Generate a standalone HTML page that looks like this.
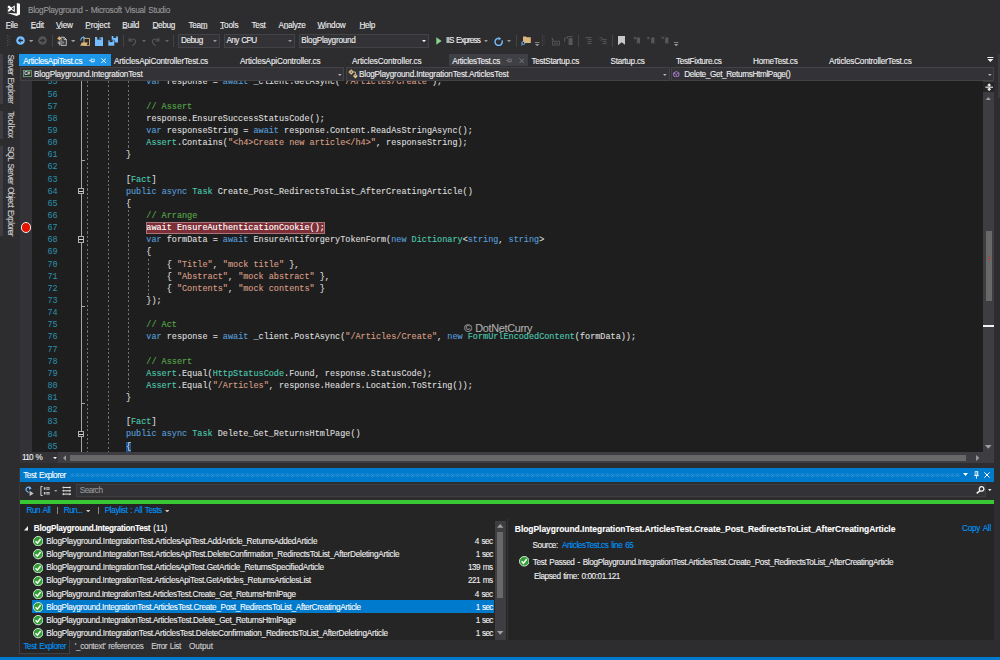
<!DOCTYPE html>
<html lang="en">
<head>
<meta charset="utf-8">
<title>BlogPlayground - Microsoft Visual Studio</title>
<style>
html,body{margin:0;padding:0;background:#2d2d30;}
body{width:1000px;height:660px;overflow:hidden;font-family:"Liberation Sans",sans-serif;}
#app{position:relative;width:1000px;height:660px;overflow:hidden;background:#2d2d30;}
#app>div,#app>svg,#app>span{position:absolute;}
.t{white-space:pre;word-spacing:0.9px;-webkit-text-stroke:0.1px currentColor;}
u{text-decoration:underline;text-underline-offset:0.4px;text-decoration-thickness:0.5px;text-decoration-color:rgba(241,241,241,0.6);}
#code{left:20px;top:81px;width:963px;height:371px;background:#1e1e1e;overflow:hidden;}
#code .gut{position:absolute;left:0;top:0;width:12px;height:371px;background:#333337;}
#code .ln{position:absolute;left:0;top:-4.58px;width:37.6px;text-align:right;color:#2b91af;font:8.5px/12.15px "Liberation Mono",monospace;white-space:pre;}
#code .src{-webkit-text-stroke:0.12px currentColor;position:absolute;left:65.1px;top:-4.6px;color:#dcdcdc;font:8.505px/12.15px "Liberation Mono",monospace;white-space:pre;}
#code .src div,#code .ln div{height:12.15px;}
.k{color:#569cd6}.y{color:#4ec9b0}.s{color:#d69d85}.c{color:#57a64a}
.bp{background:#7d2e36;color:#fff;outline:1px solid #a8757a;outline-offset:-1px;display:inline-block;height:12.15px;padding:0 0.6px;margin:0 -0.6px;}
.bm{background:#0f4584;box-shadow:inset 0 0 0 0.6px #2f63a0;}
.guide{position:absolute;top:0;width:1.2px;height:371px;background:repeating-linear-gradient(to bottom,#727272 0,#727272 2.1px,transparent 2.1px,transparent 4.3px);}
</style>
</head>
<body>
<div id="app">
<svg style="left:6px;top:2px;" width="15" height="15" viewBox="0 0 15 15"><path d="M0.8 10.8L10.8 11.4V1L14 1.7V12.6L10.6 13.9Z" fill="#fff"/><path d="M1.8 4.2L3 3.6L5.6 5.6L8.8 3.2V10.2L5.6 7.8L3 9.8L1.8 9.2ZM1.7 5.5L3.4 6.7L1.7 7.9ZM7.7 5.1L5.7 6.7L7.7 8.3Z" fill="#fff" fill-rule="evenodd"/></svg>
<svg style="left:7px;top:35px;" width="3" height="12" viewBox="0 0 3 12"><rect x="0.0" y="0.00" width="0.9" height="0.9" fill="#5a5a5e"/><rect x="1.6" y="1.25" width="0.9" height="0.9" fill="#5a5a5e"/><rect x="0.0" y="2.50" width="0.9" height="0.9" fill="#5a5a5e"/><rect x="1.6" y="3.75" width="0.9" height="0.9" fill="#5a5a5e"/><rect x="0.0" y="5.00" width="0.9" height="0.9" fill="#5a5a5e"/><rect x="1.6" y="6.25" width="0.9" height="0.9" fill="#5a5a5e"/><rect x="0.0" y="7.50" width="0.9" height="0.9" fill="#5a5a5e"/><rect x="1.6" y="8.75" width="0.9" height="0.9" fill="#5a5a5e"/><rect x="0.0" y="10.00" width="0.9" height="0.9" fill="#5a5a5e"/></svg>
<svg style="left:15.6px;top:36.1px;" width="9" height="9" viewBox="0 0 9 9"><circle cx="4.5" cy="4.5" r="4.3" fill="#75beff"/><path d="M2 4.5 L4.6 2 V3.7 H7 V5.3 H4.6 V7 Z" fill="#2d2d30"/></svg>
<svg style="left:28.9px;top:39.7px;" width="4.3" height="2.4" viewBox="0 0 4.3 2.4"><path d="M0 0H4.3L2.15 2.4Z" fill="#999"/></svg>
<svg style="left:37.5px;top:36.1px;" width="9" height="9" viewBox="0 0 9 9"><circle cx="4.5" cy="4.5" r="4.3" fill="#555559"/><path d="M7 4.5 L4.4 2 V3.7 H2 V5.3 H4.4 V7 Z" fill="#2d2d30"/></svg>
<div style="left:52.3px;top:34.6px;width:1px;height:12.6px;background:#434347;"></div>
<svg style="left:57.2px;top:36.2px;" width="10" height="10" viewBox="0 0 10 10"><path d="M4 1.2H7.2L9.3 3.3V9.4H4Z" fill="#3a3a3e" stroke="#c8c8c8" stroke-width="0.9"/><path d="M7 1.2V3.5H9.3" fill="none" stroke="#c8c8c8" stroke-width="0.8"/><path d="M5.4 4.4L7.6 6.6L5.4 8.4Z" fill="#8a8a8e"/><path d="M1.2 5.4V7.4H3M2.6 5.4V9.4" fill="none" stroke="#c8c8c8" stroke-width="0.8"/><path d="M2.3 0L3.2 1.5L4.7 2.3L3.2 3.2L2.3 4.7L1.4 3.2L0 2.3L1.4 1.5Z" fill="#e5b777"/></svg>
<svg style="left:70.9px;top:39.7px;" width="4.3" height="2.4" viewBox="0 0 4.3 2.4"><path d="M0 0H4.3L2.15 2.4Z" fill="#999"/></svg>
<svg style="left:79.5px;top:35.6px;" width="10" height="10" viewBox="0 0 10 10"><path d="M4 2.4H9.5V9.6H4Z" fill="none" stroke="#dcb67a" stroke-width="0.9"/><path d="M0.2 9.8L1.8 6.4H7.8L6.4 9.8Z" fill="#dcb67a"/><path d="M0.9 4.6C0.5 2.2 2.4 0.8 4 1.6" fill="none" stroke="#5fb2f5" stroke-width="1.1"/><path d="M3.2 0L5.4 1.9L2.9 3.1Z" fill="#5fb2f5"/></svg>
<svg style="left:94.8px;top:36.7px;" width="8.4" height="9" viewBox="0 0 8.4 9"><path d="M0 0H7.2L8.4 1.2V9H0Z" fill="#75beff"/><rect x="2.2" y="0" width="4" height="2.6" fill="#2d2d30"/><rect x="4.6" y="0.4" width="1.1" height="1.6" fill="#75beff"/></svg>
<svg style="left:108px;top:36px;" width="10" height="10" viewBox="0 0 10 10"><path d="M3.7 0H9L10 1V6.5H3.7Z" fill="#75beff"/><rect x="5.3" y="0" width="3" height="1.9" fill="#2d2d30"/><path d="M0 4H5.6L6.6 5V10H0Z" fill="#75beff" stroke="#2d2d30" stroke-width="0.6"/><rect x="1.6" y="4.2" width="3" height="1.9" fill="#2d2d30"/></svg>
<div style="left:123.3px;top:34.6px;width:1px;height:12.6px;background:#434347;"></div>
<svg style="left:127.5px;top:36.5px;" width="9" height="9" viewBox="0 0 9 9"><path d="M1.2 0.8V4H4.4M1.4 3.8C3 1.6 6.2 1.3 7.4 3.4 C8.4 5.3 6.6 7.2 4.4 8.6" fill="none" stroke="#58585c" stroke-width="1.1"/></svg>
<svg style="left:142px;top:39.8px;" width="4" height="2.2" viewBox="0 0 4 2.2"><path d="M0 0H4L2.0 2.2Z" fill="#656569"/></svg>
<svg style="left:150.8px;top:36.5px;" width="9" height="9" viewBox="0 0 9 9"><path d="M7.8 0.8V4H4.6M7.6 3.8C6 1.6 2.8 1.3 1.6 3.4 C0.6 5.3 2.4 7.2 4.6 8.6" fill="none" stroke="#58585c" stroke-width="1.1"/></svg>
<svg style="left:165px;top:39.8px;" width="4" height="2.2" viewBox="0 0 4 2.2"><path d="M0 0H4L2.0 2.2Z" fill="#656569"/></svg>
<div style="left:173.3px;top:34.6px;width:1px;height:12.6px;background:#434347;"></div>
<div style="left:177.7px;top:34px;width:42.0px;height:13.5px;background:#333337;box-sizing:border-box;border:1px solid #434346;"></div>
<svg style="left:213.2px;top:39.8px;" width="4" height="2.2" viewBox="0 0 4 2.2"><path d="M0 0H4L2.0 2.2Z" fill="#999"/></svg>
<div style="left:223.8px;top:34px;width:71.0px;height:13.5px;background:#333337;box-sizing:border-box;border:1px solid #434346;"></div>
<svg style="left:288.3px;top:39.8px;" width="4" height="2.2" viewBox="0 0 4 2.2"><path d="M0 0H4L2.0 2.2Z" fill="#999"/></svg>
<div style="left:299.3px;top:34px;width:129.5px;height:13.5px;background:#333337;box-sizing:border-box;border:1px solid #434346;"></div>
<svg style="left:422.3px;top:39.8px;" width="4" height="2.2" viewBox="0 0 4 2.2"><path d="M0 0H4L2.0 2.2Z" fill="#f1f1f1"/></svg>
<svg style="left:435.5px;top:37px;" width="6" height="8" viewBox="0 0 6 8"><path d="M0.3 0.2L5.6 4L0.3 7.8Z" fill="#84d58a"/></svg>
<svg style="left:484.4px;top:39.8px;" width="4" height="2.2" viewBox="0 0 4 2.2"><path d="M0 0H4L2.0 2.2Z" fill="#999"/></svg>
<svg style="left:493.5px;top:36.5px;" width="9.5" height="9.5" viewBox="0 0 9.5 9.5"><path d="M7.9 3.4A3.6 3.6 0 1 1 4.6 1.3" fill="none" stroke="#75beff" stroke-width="1.4"/><path d="M4.2 0L7.2 1.6L4.6 3.6Z" fill="#75beff"/></svg>
<svg style="left:507px;top:39.8px;" width="4" height="2.2" viewBox="0 0 4 2.2"><path d="M0 0H4L2.0 2.2Z" fill="#999"/></svg>
<div style="left:515.8px;top:34.6px;width:1px;height:12.6px;background:#434347;"></div>
<svg style="left:520.5px;top:35.5px;" width="10.5" height="10" viewBox="0 0 10.5 10"><path d="M2 0.4H5L5.8 1.2H9.8V7H2Z" fill="#dcb67a"/><circle cx="2.3" cy="7" r="1.5" fill="#2d2d30" stroke="#75beff" stroke-width="0.9"/><path d="M1.2 8.2L0.2 9.6" stroke="#75beff" stroke-width="0.9"/></svg>
<svg style="left:535px;top:42px;" width="4.5" height="4.5" viewBox="0 0 4.5 4.5"><path d="M0 0.4H4.4" stroke="#999" stroke-width="0.9"/><path d="M0 2H4.4L2.2 4.3Z" fill="#999"/></svg>
<svg style="left:542px;top:35px;" width="3" height="12" viewBox="0 0 3 12"><rect x="0.0" y="0.00" width="0.9" height="0.9" fill="#5a5a5e"/><rect x="1.6" y="1.25" width="0.9" height="0.9" fill="#5a5a5e"/><rect x="0.0" y="2.50" width="0.9" height="0.9" fill="#5a5a5e"/><rect x="1.6" y="3.75" width="0.9" height="0.9" fill="#5a5a5e"/><rect x="0.0" y="5.00" width="0.9" height="0.9" fill="#5a5a5e"/><rect x="1.6" y="6.25" width="0.9" height="0.9" fill="#5a5a5e"/><rect x="0.0" y="7.50" width="0.9" height="0.9" fill="#5a5a5e"/><rect x="1.6" y="8.75" width="0.9" height="0.9" fill="#5a5a5e"/><rect x="0.0" y="10.00" width="0.9" height="0.9" fill="#5a5a5e"/></svg>
<svg style="left:550.5px;top:36.5px;" width="9" height="9" viewBox="0 0 9 9"><path d="M0.8 0.3L3.3 3.6 L1.9 3.6 L0.8 2.8Z" fill="#58585c"/><rect x="1.6" y="4.2" width="6.8" height="3.8" fill="none" stroke="#58585c" stroke-width="0.9"/><path d="M3.2 6.1H7" stroke="#58585c" stroke-width="0.9"/></svg>
<svg style="left:564px;top:36px;" width="9.5" height="9.5" viewBox="0 0 9.5 9.5"><path d="M0.6 5.8V2H3.6V0.6H8.6" fill="none" stroke="#58585c" stroke-width="0.9"/><path d="M4.6 2.2H8.6V9H4.6Z" fill="#58585c"/></svg>
<div style="left:578.3px;top:34.6px;width:1px;height:12.6px;background:#434347;"></div>
<svg style="left:585px;top:37px;" width="7" height="8" viewBox="0 0 7 8"><path d="M0.3 0.6H6.6M2.6 2.6H6.6M2.6 4.6H6.6M2.6 6.6H6.6" stroke="#58585c" stroke-width="1"/></svg>
<svg style="left:598.5px;top:37px;" width="8" height="8" viewBox="0 0 8 8"><path d="M0.4 1.4L2.2 0.4L3.6 1.8L1.4 3.6" fill="none" stroke="#58585c" stroke-width="0.9"/><path d="M3.6 2.6H7.6M3.6 4.6H7.6M3.6 6.6H7.6" stroke="#58585c" stroke-width="1"/></svg>
<div style="left:611.8px;top:34.6px;width:1px;height:12.6px;background:#434347;"></div>
<svg style="left:617.7px;top:35.6px;" width="7.5" height="9.2" viewBox="0 0 7.5 9.2"><path d="M0 0H7.4V9.2L3.7 6.2L0 9.2Z" fill="#c8c8c8"/></svg>
<svg style="left:633px;top:36px;" width="7.5" height="8.5" viewBox="0 0 7.5 8.5"><path d="M0.2 2L2.6 0.2V3.8Z" fill="#58585c"/><path d="M2.6 2H4.4" stroke="#58585c" stroke-width="0.8"/><path d="M3.8 1.6H7V8.2L5.4 6.6L3.8 8.2Z" fill="#58585c"/></svg>
<svg style="left:646.5px;top:36px;" width="8" height="8.5" viewBox="0 0 8 8.5"><path d="M3 2L0.6 0.2V3.8Z" fill="#58585c"/><path d="M0 2H1.4" stroke="#58585c" stroke-width="0.8"/><path d="M4.2 1.6H7.4V8.2L5.8 6.6L4.2 8.2Z" fill="#58585c"/></svg>
<svg style="left:661px;top:36px;" width="8" height="8.5" viewBox="0 0 8 8.5"><path d="M0.3 0.3L3.2 3.2M3.2 0.3L0.3 3.2" stroke="#58585c" stroke-width="0.9"/><path d="M4.2 1.6H7.4V8.2L5.8 6.6L4.2 8.2Z" fill="#58585c"/></svg>
<svg style="left:674.3px;top:42px;" width="4.5" height="4.5" viewBox="0 0 4.5 4.5"><path d="M0 0.4H4.4" stroke="#999" stroke-width="0.9"/><path d="M0 2H4.4L2.2 4.3Z" fill="#999"/></svg>
<div style="left:0px;top:53.8px;width:2.8px;height:49.8px;background:#3e3e42;"></div>
<div style="left:0px;top:110.6px;width:2.8px;height:28.80000000000001px;background:#3e3e42;"></div>
<div style="left:0px;top:145.8px;width:2.8px;height:90.6px;background:#3e3e42;"></div>
<div style="left:19.4px;top:54px;width:91.8px;height:12.2px;background:#1c97ea;"></div>
<svg style="left:89.2px;top:58.2px;" width="6" height="5" viewBox="0 0 6 5"><path d="M0 2.5H2.2M2.2 0.6V4.4M2.2 1.2H5.4V3.4H2.2M2.2 3.8H5.4" fill="none" stroke="#d6ebfa" stroke-width="0.8"/></svg>
<svg style="left:100.8px;top:57.8px;" width="5.4" height="5.4" viewBox="0 0 5.4 5.4"><path d="M0.4 0.4L5.0 5.0M5.0 0.4L0.4 5.0" stroke="#fff" stroke-width="1"/></svg>
<div style="left:449.4px;top:54px;width:78.6px;height:12.2px;background:#3f3f46;"></div>
<svg style="left:506.3px;top:58px;" width="6" height="5" viewBox="0 0 6 5"><path d="M0 2.5H2.2M2.2 0.6V4.4M2.2 1.2H5.4V3.4H2.2M2.2 3.8H5.4" fill="none" stroke="#77777b" stroke-width="0.8"/></svg>
<svg style="left:518.6px;top:57.6px;" width="5.6" height="5.6" viewBox="0 0 5.6 5.6"><path d="M0.4 0.4L5.199999999999999 5.199999999999999M5.199999999999999 0.4L0.4 5.199999999999999" stroke="#77777b" stroke-width="1"/></svg>
<svg style="left:986.5px;top:57px;" width="7" height="5" viewBox="0 0 7 5"><path d="M0.4 0.5H6.4" stroke="#f1f1f1" stroke-width="1"/><path d="M0.4 2H6.4L3.4 5Z" fill="#f1f1f1"/></svg>
<div style="left:19.6px;top:67.4px;width:324.59999999999997px;height:13.3px;background:#333337;box-sizing:border-box;border:1px solid #434346;"></div>
<svg style="left:338.0px;top:73.9px;" width="3.7" height="2" viewBox="0 0 3.7 2"><path d="M0 0H3.7L1.85 2Z" fill="#b4b4b4"/></svg>
<div style="left:345.6px;top:67.4px;width:324.0px;height:13.3px;background:#333337;box-sizing:border-box;border:1px solid #434346;"></div>
<svg style="left:663.4px;top:73.9px;" width="3.7" height="2" viewBox="0 0 3.7 2"><path d="M0 0H3.7L1.85 2Z" fill="#b4b4b4"/></svg>
<div style="left:671px;top:67.4px;width:323.4px;height:13.3px;background:#333337;box-sizing:border-box;border:1px solid #434346;"></div>
<svg style="left:988.1999999999999px;top:73.9px;" width="3.7" height="2" viewBox="0 0 3.7 2"><path d="M0 0H3.7L1.85 2Z" fill="#b4b4b4"/></svg>
<svg style="left:23px;top:69.8px;" width="9" height="7" viewBox="0 0 9 7"><rect x="0.4" y="0.4" width="8.2" height="6.2" fill="#2d2d30" stroke="#6cae75" stroke-width="0.8"/><text x="1.2" y="5.4" font-family="Liberation Sans, sans-serif" font-size="4.6" font-weight="bold" fill="#e8e8e8">C#</text></svg>
<svg style="left:347.8px;top:68.8px;" width="10" height="10" viewBox="0 0 10 10"><path d="M3.2 0.2L6 3L3.2 5.8L0.4 3Z" fill="#e8c88f"/><path d="M7.4 4.6L9.8 7L7.4 9.6L5 7Z" fill="#e8c88f"/><path d="M5.6 3H7.4V4.8" fill="none" stroke="#e8c88f" stroke-width="0.8"/><path d="M2.4 2.2H4.2M2.4 3.6H4.2M6.6 6.6H8.2" stroke="#2d2d30" stroke-width="0.6"/></svg>
<svg style="left:673.4px;top:70.6px;" width="6.6" height="6.8" viewBox="0 0 8 8"><path d="M4 0.5L7.2 2.2V5.8L4 7.5L0.8 5.8V2.2Z" fill="none" stroke="#b180d7" stroke-width="1.1"/><path d="M0.9 2.3L4 4L7.1 2.3M4 4V7.4" fill="none" stroke="#b180d7" stroke-width="0.9"/></svg>
<div style="left:983px;top:81px;width:11px;height:371px;background:#3e3e42;"></div>
<div style="left:983.4px;top:81.6px;width:10.4px;height:10.4px;background:#252526;"></div>
<svg style="left:984.5px;top:82.5px;" width="8.4" height="8.4" viewBox="0 0 8.4 8.4"><path d="M4.2 0.2L6.4 2.6H5V3.4H3.4V2.6H2ZM4.2 8.2L6.4 5.8H5V5H3.4V5.8H2Z" fill="#f1f1f1"/><path d="M0.4 4.2H8" stroke="#f1f1f1" stroke-width="1.1"/></svg>
<svg style="left:985.4px;top:96.5px;" width="6.6" height="3.8" viewBox="0 0 6.6 3.8"><path d="M0 3.8L3.3 0L6.6 3.8Z" fill="#a0a0a0"/></svg>
<div style="left:985.8px;top:231px;width:5.8px;height:70px;background:#686868;"></div>
<div style="left:987.8px;top:257px;width:2px;height:1.2px;background:#c0392b;"></div>
<div style="left:987.8px;top:259px;width:2px;height:1.2px;background:#c0392b;"></div>
<div style="left:983px;top:325.4px;width:11px;height:1.2px;background:#f1f1f1;"></div>
<svg style="left:985.4px;top:444.8px;" width="6.6" height="3.8" viewBox="0 0 6.6 3.8"><path d="M0 0L3.3 3.8L6.6 0Z" fill="#a0a0a0"/></svg>
<div style="left:997.8px;top:54px;width:2.2px;height:44px;background:#3a3a3e;"></div>
<div style="left:20px;top:451.8px;width:974px;height:11px;background:#3e3e42;"></div>
<div style="left:20px;top:451.8px;width:38.4px;height:11px;background:#333337;"></div>
<svg style="left:53px;top:456.8px;" width="4" height="2.2" viewBox="0 0 4 2.2"><path d="M0 0H4L2.0 2.2Z" fill="#f1f1f1"/></svg>
<svg style="left:63px;top:454.8px;" width="3.4" height="6" viewBox="0 0 3.4 6"><path d="M3.4 0L0 3L3.4 6Z" fill="#999"/></svg>
<div style="left:70px;top:454.7px;width:896.3px;height:6px;background:#686868;"></div>
<svg style="left:975.8px;top:454.8px;" width="3.6" height="6" viewBox="0 0 3.6 6"><path d="M0 0L3.6 3L0 6Z" fill="#999"/></svg>
<div style="left:19.4px;top:468px;width:975px;height:172px;background:#252526;"></div>
<div style="left:19.2px;top:468px;width:0.9px;height:186px;background:#3a3a3e;"></div>
<div style="left:20px;top:468px;width:974px;height:14px;background:#007acc;"></div>
<div style="left:70px;top:472.8px;width:890px;height:4.6px;background:transparent;background-image:radial-gradient(circle,#4b9fd9 0.55px,transparent 0.75px),radial-gradient(circle,#4b9fd9 0.55px,transparent 0.75px);background-size:2.5px 2.5px;background-position:0 0,1.25px 1.25px;"></div>
<svg style="left:963.3px;top:473.4px;" width="4.6" height="2.7" viewBox="0 0 4.6 2.7"><path d="M0 0H5L2.5 3Z" fill="#fff"/></svg>
<svg style="left:973.6px;top:470.6px;" width="5" height="8" viewBox="0 0 5 8"><path d="M1.2 0.4H3.8V4.4H1.2ZM3 0.4V4.4M0 4.6H5M2.5 4.6V7.8" fill="none" stroke="#fff" stroke-width="0.8"/></svg>
<svg style="left:984px;top:471.8px;" width="6" height="6" viewBox="0 0 6 6"><path d="M0.4 0.4L5.6 5.6M5.6 0.4L0.4 5.6" stroke="#fff" stroke-width="1"/></svg>
<div style="left:20px;top:482px;width:974px;height:18px;background:#2d2d30;"></div>
<svg style="left:25px;top:485.5px;" width="9" height="10" viewBox="0 0 9 10"><path d="M1 4.4C0.6 1.8 3.2 0.4 5 1.8" fill="none" stroke="#75beff" stroke-width="1.2"/><path d="M4 0.2L6.8 2.2L4 3.8Z" fill="#75beff"/><path d="M4.6 4.8L8.6 7.4L4.6 10Z" fill="#c8c8c8"/><path d="M1 4.4L3.6 6.6" stroke="#75beff" stroke-width="1.1"/></svg>
<svg style="left:39.6px;top:485.6px;" width="10" height="10" viewBox="0 0 10 10"><path d="M2.6 0.5H0.9V9.5H2.6" fill="none" stroke="#d0d0d0" stroke-width="1"/><path d="M3.9 1.3H5.5V3.7H3.9ZM6.3 1.3H9.7V3.7H6.3ZM3.9 6.1H5.5V8.5H3.9ZM6.3 6.1H9.7V8.5H6.3Z" fill="#c8c8c8"/><path d="M6.3 2.5H9.7M6.3 7.3H9.7" stroke="#2d2d30" stroke-width="0.5"/></svg>
<svg style="left:53.8px;top:490.4px;" width="3.6" height="2" viewBox="0 0 3.6 2"><path d="M0 0H3.6L1.8 2Z" fill="#999"/></svg>
<svg style="left:62px;top:486.2px;" width="9.4" height="9.6" viewBox="0 0 9.4 9.6"><path d="M0 1.5L1.8 0.19999999999999996V2.8ZM9.4 1.5L7.6 0.19999999999999996V2.8Z" fill="#e0e0e0"/><path d="M1.4 1.5H8" stroke="#e0e0e0" stroke-width="1.1"/><path d="M0 4.8L1.8 3.5V6.1ZM9.4 4.8L7.6 3.5V6.1Z" fill="#e0e0e0"/><path d="M1.4 4.8H8" stroke="#e0e0e0" stroke-width="1.1"/><path d="M0 8.1L1.8 6.8V9.4ZM9.4 8.1L7.6 6.8V9.4Z" fill="#e0e0e0"/><path d="M1.4 8.1H8" stroke="#e0e0e0" stroke-width="1.1"/></svg>
<div style="left:76.3px;top:483.8px;width:909.7px;height:12.8px;background:#333337;box-sizing:border-box;border:1px solid #3f3f46;"></div>
<svg style="left:976px;top:486.4px;" width="8.6" height="8" viewBox="0 0 8.6 8"><circle cx="5.6" cy="2.9" r="2.3" fill="none" stroke="#f1f1f1" stroke-width="1.3"/><path d="M3.8 4.8L0.7 7.4" stroke="#f1f1f1" stroke-width="1.6"/></svg>
<svg style="left:988px;top:488.9px;" width="3.6" height="2.1" viewBox="0 0 3.6 2.1"><path d="M0 0H3.6L1.8 2.1Z" fill="#f1f1f1"/></svg>
<div style="left:20px;top:500px;width:974px;height:4px;background:#38c833;"></div>
<div style="left:57px;top:507px;width:0.9px;height:7.2px;background:#8a8a8e;"></div>
<svg style="left:86px;top:510px;" width="4.4" height="2.4" viewBox="0 0 4.4 2.4"><path d="M0 0H4.4L2.2 2.4Z" fill="#c8c8c8"/></svg>
<div style="left:98.4px;top:507px;width:0.9px;height:7.2px;background:#8a8a8e;"></div>
<svg style="left:165px;top:510px;" width="4.4" height="2.4" viewBox="0 0 4.4 2.4"><path d="M0 0H4.4L2.2 2.4Z" fill="#c8c8c8"/></svg>
<svg style="left:23.6px;top:525.4px;" width="4.8" height="5.4" viewBox="0 0 4.8 5.4"><path d="M4.8 0V5.4H0Z" fill="#f1f1f1"/></svg>
<div style="left:32px;top:599.9px;width:462px;height:13px;background:#007acc;"></div>
<svg style="left:33.050000000000004px;top:536.1500000000001px;" width="10.3" height="10.3" viewBox="0 0 10.3 10.3"><circle cx="5.15" cy="5.15" r="4.7" fill="#2f9e33" stroke="#e6f2e6" stroke-width="0.9"/><path d="M2.5500000000000003 5.25L4.3500000000000005 7.15L7.65 2.95" fill="none" stroke="#fff" stroke-width="1.5"/></svg>
<svg style="left:33.050000000000004px;top:549.3400000000001px;" width="10.3" height="10.3" viewBox="0 0 10.3 10.3"><circle cx="5.15" cy="5.15" r="4.7" fill="#2f9e33" stroke="#e6f2e6" stroke-width="0.9"/><path d="M2.5500000000000003 5.25L4.3500000000000005 7.15L7.65 2.95" fill="none" stroke="#fff" stroke-width="1.5"/></svg>
<svg style="left:33.050000000000004px;top:562.5300000000001px;" width="10.3" height="10.3" viewBox="0 0 10.3 10.3"><circle cx="5.15" cy="5.15" r="4.7" fill="#2f9e33" stroke="#e6f2e6" stroke-width="0.9"/><path d="M2.5500000000000003 5.25L4.3500000000000005 7.15L7.65 2.95" fill="none" stroke="#fff" stroke-width="1.5"/></svg>
<svg style="left:33.050000000000004px;top:575.7200000000001px;" width="10.3" height="10.3" viewBox="0 0 10.3 10.3"><circle cx="5.15" cy="5.15" r="4.7" fill="#2f9e33" stroke="#e6f2e6" stroke-width="0.9"/><path d="M2.5500000000000003 5.25L4.3500000000000005 7.15L7.65 2.95" fill="none" stroke="#fff" stroke-width="1.5"/></svg>
<svg style="left:33.050000000000004px;top:588.9100000000001px;" width="10.3" height="10.3" viewBox="0 0 10.3 10.3"><circle cx="5.15" cy="5.15" r="4.7" fill="#2f9e33" stroke="#e6f2e6" stroke-width="0.9"/><path d="M2.5500000000000003 5.25L4.3500000000000005 7.15L7.65 2.95" fill="none" stroke="#fff" stroke-width="1.5"/></svg>
<svg style="left:33.050000000000004px;top:602.1000000000001px;" width="10.3" height="10.3" viewBox="0 0 10.3 10.3"><circle cx="5.15" cy="5.15" r="4.7" fill="#2f9e33" stroke="#e6f2e6" stroke-width="0.9"/><path d="M2.5500000000000003 5.25L4.3500000000000005 7.15L7.65 2.95" fill="none" stroke="#fff" stroke-width="1.5"/></svg>
<svg style="left:33.050000000000004px;top:615.2900000000001px;" width="10.3" height="10.3" viewBox="0 0 10.3 10.3"><circle cx="5.15" cy="5.15" r="4.7" fill="#2f9e33" stroke="#e6f2e6" stroke-width="0.9"/><path d="M2.5500000000000003 5.25L4.3500000000000005 7.15L7.65 2.95" fill="none" stroke="#fff" stroke-width="1.5"/></svg>
<svg style="left:33.050000000000004px;top:628.4800000000001px;" width="10.3" height="10.3" viewBox="0 0 10.3 10.3"><circle cx="5.15" cy="5.15" r="4.7" fill="#2f9e33" stroke="#e6f2e6" stroke-width="0.9"/><path d="M2.5500000000000003 5.25L4.3500000000000005 7.15L7.65 2.95" fill="none" stroke="#fff" stroke-width="1.5"/></svg>
<div style="left:495px;top:521px;width:11px;height:119px;background:#3e3e42;"></div>
<svg style="left:497.2px;top:524.4px;" width="6.4" height="3.7" viewBox="0 0 6.4 3.7"><path d="M0 3.7L3.2 0L6.4 3.7Z" fill="#a0a0a0"/></svg>
<div style="left:497.4px;top:532px;width:5.6px;height:66.4px;background:#686868;"></div>
<svg style="left:497.2px;top:631.2px;" width="6.4" height="3.7" viewBox="0 0 6.4 3.7"><path d="M0 0L3.2 3.7L6.4 0Z" fill="#a0a0a0"/></svg>
<div style="left:506.6px;top:518px;width:1px;height:122px;background:#343437;"></div>
<svg style="left:518.75px;top:556.35px;" width="10.5" height="10.5" viewBox="0 0 10.5 10.5"><circle cx="5.25" cy="5.25" r="4.8" fill="#2f9e33" stroke="#e6f2e6" stroke-width="0.9"/><path d="M2.65 5.35L4.45 7.25L7.75 3.05" fill="none" stroke="#fff" stroke-width="1.5"/></svg>
<div style="left:19.4px;top:640px;width:50px;height:13.6px;background:#252526;"></div>
<div style="left:19.4px;top:640px;width:1px;height:13.6px;background:#3f3f46;"></div>
<div style="left:69px;top:640.4px;width:1px;height:13.2px;background:#3f3f46;"></div>
<div style="left:19.4px;top:653px;width:50px;height:0.8px;background:#3f3f46;"></div>
<div style="left:0px;top:657px;width:1000px;height:3px;background:#007acc;"></div>
<div id="code"><div class="gut"></div><div style="position:absolute;left:61px;top:0;width:1.1px;height:371px;background:#a5a5a5;"></div><div class="guide" style="left:67px;top:0.00px;height:371.00px;"></div><div class="guide" style="left:87.6px;top:0.00px;height:371.00px;"></div><div class="guide" style="left:108px;top:0.00px;height:68.42px;"></div><div class="guide" style="left:108px;top:129.17px;height:182.25px;"></div><div class="guide" style="left:128.2px;top:177.77px;height:36.45px;"></div><div style="position:absolute;left:57.8px;top:106.67px;width:6.6px;height:6.8px;box-sizing:border-box;border:0.9px solid #b0b0b0;background:#1e1e1e;"></div><div style="position:absolute;left:59.4px;top:109.57px;width:3.4px;height:1.1px;background:#d8d8d8;"></div><div style="position:absolute;left:57.8px;top:155.27px;width:6.6px;height:6.8px;box-sizing:border-box;border:0.9px solid #b0b0b0;background:#1e1e1e;"></div><div style="position:absolute;left:59.4px;top:158.17px;width:3.4px;height:1.1px;background:#d8d8d8;"></div><div style="position:absolute;left:57.8px;top:349.67px;width:6.6px;height:6.8px;box-sizing:border-box;border:0.9px solid #b0b0b0;background:#1e1e1e;"></div><div style="position:absolute;left:59.4px;top:352.57px;width:3.4px;height:1.1px;background:#d8d8d8;"></div><div style="position:absolute;left:61px;top:78.97px;width:3.6px;height:1px;background:#a5a5a5;"></div><div style="position:absolute;left:61px;top:224.77px;width:3.6px;height:1px;background:#a5a5a5;"></div><div style="position:absolute;left:61px;top:321.97px;width:3.6px;height:1px;background:#a5a5a5;"></div><div class="ln"><div>55</div><div>56</div><div>57</div><div>58</div><div>59</div><div>60</div><div>61</div><div>62</div><div>63</div><div>64</div><div>65</div><div>66</div><div>67</div><div>68</div><div>69</div><div>70</div><div>71</div><div>72</div><div>73</div><div>74</div><div>75</div><div>76</div><div>77</div><div>78</div><div>79</div><div>80</div><div>81</div><div>82</div><div>83</div><div>84</div><div>85</div><div>86</div></div><div class="src"><div>            <span class="k">var</span> response = <span class="k">await</span> _client.GetAsync(<span class="s">"/Articles/Create"</span>);</div><div> </div><div>            <span class="c">// Assert</span></div><div>            response.EnsureSuccessStatusCode();</div><div>            <span class="k">var</span> responseString = <span class="k">await</span> response.Content.ReadAsStringAsync();</div><div>            <span class="y">Assert</span>.Contains(<span class="s">"&lt;h4&gt;Create new article&lt;/h4&gt;"</span>, responseString);</div><div>        }</div><div> </div><div>        [<span class="y">Fact</span>]</div><div>        <span class="k">public</span> <span class="k">async</span> <span class="y">Task</span> Create_Post_RedirectsToList_AfterCreatingArticle()</div><div>        {</div><div>            <span class="c">// Arrange</span></div><div>            <span class="bp">await EnsureAuthenticationCookie();</span></div><div>            <span class="k">var</span> formData = <span class="k">await</span> EnsureAntiforgeryTokenForm(<span class="k">new</span> <span class="y">Dictionary</span>&lt;<span class="k">string</span>, <span class="k">string</span>&gt;</div><div>            {</div><div>                { <span class="s">"Title"</span>, <span class="s">"mock title"</span> },</div><div>                { <span class="s">"Abstract"</span>, <span class="s">"mock abstract"</span> },</div><div>                { <span class="s">"Contents"</span>, <span class="s">"mock contents"</span> }</div><div>            });</div><div> </div><div>            <span class="c">// Act</span></div><div>            <span class="k">var</span> response = <span class="k">await</span> _client.PostAsync(<span class="s">"/Articles/Create"</span>, <span class="k">new</span> <span class="y">FormUrlEncodedContent</span>(formData));</div><div> </div><div>            <span class="c">// Assert</span></div><div>            <span class="y">Assert</span>.Equal(<span class="y">HttpStatusCode</span>.Found, response.StatusCode);</div><div>            <span class="y">Assert</span>.Equal(<span class="s">"/Articles"</span>, response.Headers.Location.ToString());</div><div>        }</div><div> </div><div>        [<span class="y">Fact</span>]</div><div>        <span class="k">public</span> <span class="k">async</span> <span class="y">Task</span> Delete_Get_ReturnsHtmlPage()</div><div>        <span class="bm">{</span></div><div>            <span class="c">// Arrange</span></div></div><div style="position:absolute;left:0.8px;top:141.12px;width:10.5px;height:10.5px;box-sizing:border-box;border-radius:50%;background:#e51400;border:0.9px solid #f2ecec;"></div><span class="t" style="position:absolute;left:444px;top:241.4px;font:10.9px/12px 'Liberation Sans', sans-serif;color:#adadad;letter-spacing:-0.33px;">© DotNetCurry</span></div>
<span class="t" style="left:28px;top:4.22px;font:normal 8.3px/12px 'Liberation Sans', sans-serif;color:#999;letter-spacing:-0.295px;">BlogPlayground - Microsoft Visual Studio</span>
<span class="t" style="left:5.8px;top:19.56px;font:normal 8.2px/12px 'Liberation Sans', sans-serif;color:#f1f1f1;letter-spacing:-0.305px;"><u>F</u>ile</span>
<span class="t" style="left:30.8px;top:19.56px;font:normal 8.2px/12px 'Liberation Sans', sans-serif;color:#f1f1f1;letter-spacing:-0.331px;"><u>E</u>dit</span>
<span class="t" style="left:56px;top:19.56px;font:normal 8.2px/12px 'Liberation Sans', sans-serif;color:#f1f1f1;letter-spacing:-0.206px;"><u>V</u>iew</span>
<span class="t" style="left:85.3px;top:19.56px;font:normal 8.2px/12px 'Liberation Sans', sans-serif;color:#f1f1f1;letter-spacing:-0.143px;"><u>P</u>roject</span>
<span class="t" style="left:122.3px;top:19.56px;font:normal 8.2px/12px 'Liberation Sans', sans-serif;color:#f1f1f1;letter-spacing:-0.284px;"><u>B</u>uild</span>
<span class="t" style="left:152.5px;top:19.56px;font:normal 8.2px/12px 'Liberation Sans', sans-serif;color:#f1f1f1;letter-spacing:-0.328px;"><u>D</u>ebug</span>
<span class="t" style="left:188.5px;top:19.56px;font:normal 8.2px/12px 'Liberation Sans', sans-serif;color:#f1f1f1;letter-spacing:-0.308px;">Tea<u>m</u></span>
<span class="t" style="left:220px;top:19.56px;font:normal 8.2px/12px 'Liberation Sans', sans-serif;color:#f1f1f1;letter-spacing:-0.125px;"><u>T</u>ools</span>
<span class="t" style="left:251.5px;top:19.56px;font:normal 8.2px/12px 'Liberation Sans', sans-serif;color:#f1f1f1;letter-spacing:-0.258px;">Te<u>s</u>t</span>
<span class="t" style="left:278.5px;top:19.56px;font:normal 8.2px/12px 'Liberation Sans', sans-serif;color:#f1f1f1;letter-spacing:-0.308px;">A<u>n</u>alyze</span>
<span class="t" style="left:317.5px;top:19.56px;font:normal 8.2px/12px 'Liberation Sans', sans-serif;color:#f1f1f1;letter-spacing:-0.190px;"><u>W</u>indow</span>
<span class="t" style="left:359.5px;top:19.56px;font:normal 8.2px/12px 'Liberation Sans', sans-serif;color:#f1f1f1;letter-spacing:-0.340px;"><u>H</u>elp</span>
<span class="t" style="left:181px;top:34.86px;font:normal 8.2px/12px 'Liberation Sans', sans-serif;color:#f1f1f1;letter-spacing:-0.468px;">Debug</span>
<span class="t" style="left:226.5px;top:34.86px;font:normal 8.2px/12px 'Liberation Sans', sans-serif;color:#f1f1f1;letter-spacing:-0.654px;">Any CPU</span>
<span class="t" style="left:301.3px;top:34.86px;font:normal 8.2px/12px 'Liberation Sans', sans-serif;color:#f1f1f1;letter-spacing:-0.251px;">BlogPlayground</span>
<span class="t" style="left:446px;top:34.86px;font:normal 8.2px/12px 'Liberation Sans', sans-serif;color:#f1f1f1;letter-spacing:-0.797px;">IIS Express</span>
<span class="t" style="left:0;top:0.00px;font:normal 8.2px/12px 'Liberation Sans', sans-serif;color:#d0d0d0;letter-spacing:-0.585px;transform-origin:0 0;transform:translate(16.24px,54.4px) rotate(90deg);">Server Explorer</span>
<span class="t" style="left:0;top:0.00px;font:normal 8.2px/12px 'Liberation Sans', sans-serif;color:#d0d0d0;letter-spacing:-0.205px;transform-origin:0 0;transform:translate(16.24px,111.19999999999999px) rotate(90deg);">Toolbox</span>
<span class="t" style="left:0;top:0.00px;font:normal 8.2px/12px 'Liberation Sans', sans-serif;color:#d0d0d0;letter-spacing:-0.549px;transform-origin:0 0;transform:translate(16.24px,146.4px) rotate(90deg);">SQL Server Object Explorer</span>
<span class="t" style="left:23.2px;top:55.66px;font:normal 8.2px/12px 'Liberation Sans', sans-serif;color:#fff;letter-spacing:-0.286px;">ArticlesApiTest.cs</span>
<span class="t" style="left:114px;top:55.66px;font:normal 8.2px/12px 'Liberation Sans', sans-serif;color:#f1f1f1;letter-spacing:-0.202px;">ArticlesApiControllerTest.cs</span>
<span class="t" style="left:240px;top:55.66px;font:normal 8.2px/12px 'Liberation Sans', sans-serif;color:#f1f1f1;letter-spacing:-0.154px;">ArticlesApiController.cs</span>
<span class="t" style="left:352px;top:55.66px;font:normal 8.2px/12px 'Liberation Sans', sans-serif;color:#f1f1f1;letter-spacing:-0.135px;">ArticlesController.cs</span>
<span class="t" style="left:452.3px;top:55.66px;font:normal 8.2px/12px 'Liberation Sans', sans-serif;color:#f1f1f1;letter-spacing:-0.309px;">ArticlesTest.cs</span>
<span class="t" style="left:531.5px;top:55.66px;font:normal 8.2px/12px 'Liberation Sans', sans-serif;color:#f1f1f1;letter-spacing:-0.312px;">TestStartup.cs</span>
<span class="t" style="left:610.5px;top:55.66px;font:normal 8.2px/12px 'Liberation Sans', sans-serif;color:#f1f1f1;letter-spacing:-0.287px;">Startup.cs</span>
<span class="t" style="left:676px;top:55.66px;font:normal 8.2px/12px 'Liberation Sans', sans-serif;color:#f1f1f1;letter-spacing:-0.357px;">TestFixture.cs</span>
<span class="t" style="left:753px;top:55.66px;font:normal 8.2px/12px 'Liberation Sans', sans-serif;color:#f1f1f1;letter-spacing:-0.257px;">HomeTest.cs</span>
<span class="t" style="left:829px;top:55.66px;font:normal 8.2px/12px 'Liberation Sans', sans-serif;color:#f1f1f1;letter-spacing:-0.212px;">ArticlesControllerTest.cs</span>
<span class="t" style="left:34px;top:69.16px;font:normal 8.2px/12px 'Liberation Sans', sans-serif;color:#f1f1f1;letter-spacing:-0.177px;">BlogPlayground.IntegrationTest</span>
<span class="t" style="left:359px;top:69.16px;font:normal 8.2px/12px 'Liberation Sans', sans-serif;color:#f1f1f1;letter-spacing:-0.196px;">BlogPlayground.IntegrationTest.ArticlesTest</span>
<span class="t" style="left:684.3px;top:69.16px;font:normal 8.2px/12px 'Liberation Sans', sans-serif;color:#f1f1f1;letter-spacing:-0.359px;">Delete_Get_ReturnsHtmlPage()</span>
<span class="t" style="left:22px;top:451.56px;font:normal 8.2px/12px 'Liberation Sans', sans-serif;color:#f1f1f1;letter-spacing:-0.703px;">110 %</span>
<span class="t" style="left:23.2px;top:469.66px;font:normal 8.2px/12px 'Liberation Sans', sans-serif;color:#fff;letter-spacing:-0.468px;">Test Explorer</span>
<span class="t" style="left:79.8px;top:484.56px;font:normal 8.2px/12px 'Liberation Sans', sans-serif;color:#999;letter-spacing:-0.559px;">Search</span>
<span class="t" style="left:26.5px;top:504.76px;font:normal 8.2px/12px 'Liberation Sans', sans-serif;color:#0097fb;letter-spacing:-0.435px;">Run All</span>
<span class="t" style="left:63.8px;top:504.76px;font:normal 8.2px/12px 'Liberation Sans', sans-serif;color:#0097fb;letter-spacing:-0.577px;">Run...</span>
<span class="t" style="left:104.8px;top:504.76px;font:normal 8.2px/12px 'Liberation Sans', sans-serif;color:#0097fb;letter-spacing:-0.417px;">Playlist : All Tests</span>
<span class="t" style="left:33.8px;top:522.56px;font:bold 8.2px/12px 'Liberation Sans', sans-serif;color:#fff;letter-spacing:-0.254px;">BlogPlayground.IntegrationTest</span>
<span class="t" style="left:153.2px;top:522.56px;font:normal 8.2px/12px 'Liberation Sans', sans-serif;color:#fff;letter-spacing:0.012px;">(11)</span>
<span class="t" style="left:46.3px;top:535.76px;font:normal 8.2px/12px 'Liberation Sans', sans-serif;color:#f1f1f1;letter-spacing:-0.234px;">BlogPlayground.IntegrationTest.ArticlesApiTest.AddArticle_ReturnsAddedArticle</span>
<span class="t" style="right:507.4px;top:535.76px;font:normal 8.2px/12px 'Liberation Sans', sans-serif;color:#f1f1f1;letter-spacing:-0.537px;">4 sec</span>
<span class="t" style="left:46.3px;top:548.95px;font:normal 8.2px/12px 'Liberation Sans', sans-serif;color:#f1f1f1;letter-spacing:-0.238px;">BlogPlayground.IntegrationTest.ArticlesApiTest.DeleteConfirmation_RedirectsToList_AfterDeletingArticle</span>
<span class="t" style="right:507.4px;top:548.95px;font:normal 8.2px/12px 'Liberation Sans', sans-serif;color:#f1f1f1;letter-spacing:-0.717px;">1 sec</span>
<span class="t" style="left:46.3px;top:562.14px;font:normal 8.2px/12px 'Liberation Sans', sans-serif;color:#f1f1f1;letter-spacing:-0.248px;">BlogPlayground.IntegrationTest.ArticlesApiTest.GetArticle_ReturnsSpecifiedArticle</span>
<span class="t" style="right:507.4px;top:562.14px;font:normal 8.2px/12px 'Liberation Sans', sans-serif;color:#f1f1f1;letter-spacing:-0.508px;">139 ms</span>
<span class="t" style="left:46.3px;top:575.33px;font:normal 8.2px/12px 'Liberation Sans', sans-serif;color:#f1f1f1;letter-spacing:-0.261px;">BlogPlayground.IntegrationTest.ArticlesApiTest.GetArticles_ReturnsArticlesList</span>
<span class="t" style="right:507.4px;top:575.33px;font:normal 8.2px/12px 'Liberation Sans', sans-serif;color:#f1f1f1;letter-spacing:-0.508px;">221 ms</span>
<span class="t" style="left:46.3px;top:588.52px;font:normal 8.2px/12px 'Liberation Sans', sans-serif;color:#f1f1f1;letter-spacing:-0.317px;">BlogPlayground.IntegrationTest.ArticlesTest.Create_Get_ReturnsHtmlPage</span>
<span class="t" style="right:507.4px;top:588.52px;font:normal 8.2px/12px 'Liberation Sans', sans-serif;color:#f1f1f1;letter-spacing:-0.537px;">4 sec</span>
<span class="t" style="left:46.3px;top:601.71px;font:normal 8.2px/12px 'Liberation Sans', sans-serif;color:#fff;letter-spacing:-0.296px;">BlogPlayground.IntegrationTest.ArticlesTest.Create_Post_RedirectsToList_AfterCreatingArticle</span>
<span class="t" style="right:507.4px;top:601.71px;font:normal 8.2px/12px 'Liberation Sans', sans-serif;color:#fff;letter-spacing:-0.717px;">1 sec</span>
<span class="t" style="left:46.3px;top:614.90px;font:normal 8.2px/12px 'Liberation Sans', sans-serif;color:#f1f1f1;letter-spacing:-0.304px;">BlogPlayground.IntegrationTest.ArticlesTest.Delete_Get_ReturnsHtmlPage</span>
<span class="t" style="right:507.4px;top:614.90px;font:normal 8.2px/12px 'Liberation Sans', sans-serif;color:#f1f1f1;letter-spacing:-0.717px;">1 sec</span>
<span class="t" style="left:46.3px;top:628.09px;font:normal 8.2px/12px 'Liberation Sans', sans-serif;color:#f1f1f1;letter-spacing:-0.242px;">BlogPlayground.IntegrationTest.ArticlesTest.DeleteConfirmation_RedirectsToList_AfterDeletingArticle</span>
<span class="t" style="right:507.4px;top:628.09px;font:normal 8.2px/12px 'Liberation Sans', sans-serif;color:#f1f1f1;letter-spacing:-0.717px;">1 sec</span>
<span class="t" style="left:514.8px;top:523.05px;font:bold 8.5px/12px 'Liberation Sans', sans-serif;color:#fff;letter-spacing:-0.048px;">BlogPlayground.IntegrationTest.ArticlesTest.Create_Post_RedirectsToList_AfterCreatingArticle</span>
<span class="t" style="left:962px;top:522.76px;font:normal 8.2px/12px 'Liberation Sans', sans-serif;color:#0097fb;letter-spacing:-0.242px;">Copy All</span>
<span class="t" style="left:532.5px;top:539.66px;font:normal 8.2px/12px 'Liberation Sans', sans-serif;color:#f1f1f1;letter-spacing:-0.403px;">Source:</span>
<span class="t" style="left:562px;top:539.66px;font:normal 8.2px/12px 'Liberation Sans', sans-serif;color:#0097fb;letter-spacing:-0.393px;">ArticlesTest.cs line 65</span>
<span class="t" style="left:532.8px;top:556.66px;font:normal 8.2px/12px 'Liberation Sans', sans-serif;color:#f1f1f1;letter-spacing:-0.338px;">Test Passed - BlogPlayground.IntegrationTest.ArticlesTest.Create_Post_RedirectsToList_AfterCreatingArticle</span>
<span class="t" style="left:534px;top:570.96px;font:normal 8.2px/12px 'Liberation Sans', sans-serif;color:#f1f1f1;letter-spacing:-0.438px;">Elapsed time: 0:00:01.121</span>
<span class="t" style="left:23.5px;top:641.16px;font:normal 8.2px/12px 'Liberation Sans', sans-serif;color:#0097fb;letter-spacing:-0.468px;">Test Explorer</span>
<span class="t" style="left:74.8px;top:641.16px;font:normal 8.2px/12px 'Liberation Sans', sans-serif;color:#d0d0d0;letter-spacing:-0.349px;">&#x27;_context&#x27; references</span>
<span class="t" style="left:151.2px;top:641.16px;font:normal 8.2px/12px 'Liberation Sans', sans-serif;color:#d0d0d0;letter-spacing:-0.452px;">Error List</span>
<span class="t" style="left:189px;top:641.16px;font:normal 8.2px/12px 'Liberation Sans', sans-serif;color:#d0d0d0;letter-spacing:-0.099px;">Output</span>
</div>
</body>
</html>
